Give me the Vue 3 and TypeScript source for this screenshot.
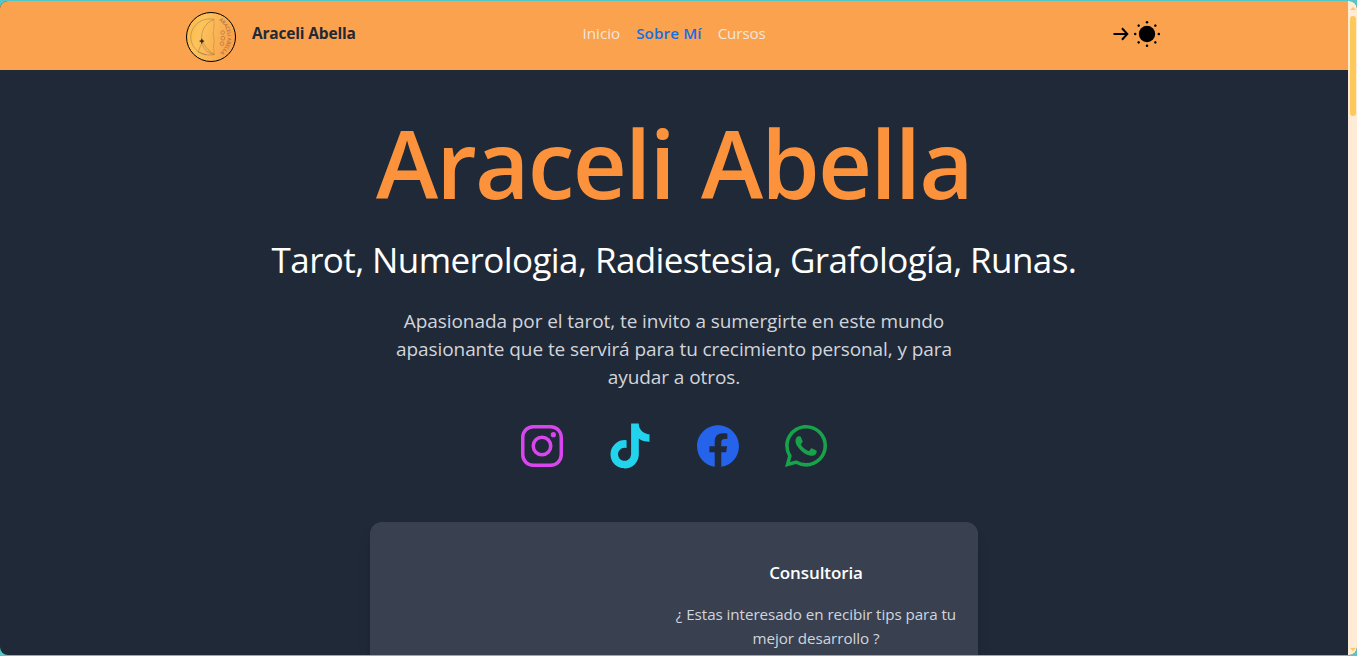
<script setup lang="ts">
interface NavLink { label: string; active?: boolean; cls: string }
interface Social { name: string; color: string; paths: string[] }

const links: NavLink[] = [
  { label: 'Inicio', cls: 'inicio' },
  { label: 'Sobre Mí', active: true, cls: 'sobre' },
  { label: 'Cursos', cls: 'cursos' },
]

const intro: string[] = [
  'Apasionada por el tarot, te invito a sumergirte en este mundo',
  'apasionante que te servirá para tu crecimiento personal, y para',
  'ayudar a otros.',
]

const rays: number[] = [0, 45, 90, 135, 180, 225, 270, 315]

const socials: Social[] = [
  {
    name: 'Instagram',
    color: '#d946ef',
    paths: [
      'M349.33 69.33a93.62 93.62 0 0193.34 93.34v186.66a93.62 93.62 0 01-93.34 93.34H162.67a93.62 93.62 0 01-93.34-93.34V162.67a93.62 93.62 0 0193.34-93.34h186.66m0-37.33H162.67C90.8 32 32 90.8 32 162.67v186.66C32 421.2 90.8 480 162.67 480h186.66C421.2 480 480 421.2 480 349.33V162.67C480 90.8 421.2 32 349.33 32z',
      'M377.33 162.67a28 28 0 1128-28 27.94 27.94 0 01-28 28zM256 181.33A74.67 74.67 0 11181.33 256 74.75 74.75 0 01256 181.33m0-37.33a112 112 0 10112 112 112 112 0 00-112-112z',
    ],
  },
  {
    name: 'TikTok',
    color: '#22d3ee',
    paths: [
      'M412.19 118.66a109.27 109.27 0 01-9.45-5.5 132.87 132.87 0 01-24.27-20.62c-18.1-20.71-24.86-41.72-27.35-56.43h.1C349.14 23.9 350 16 350.13 16h-82.44v318.78c0 4.28 0 8.51-.18 12.69 0 .52-.05 1-.08 1.56 0 .23 0 .47-.05.71v.18a70 70 0 01-35.22 55.56 68.8 68.8 0 01-34.11 9c-38.41 0-69.54-31.32-69.54-70s31.13-70 69.54-70a68.9 68.9 0 0121.41 3.39l.1-83.94a153.14 153.14 0 00-118 34.52 161.79 161.79 0 00-35.3 43.53c-3.48 6-16.61 30.11-18.2 69.24-1 22.21 5.67 45.22 8.85 54.73v.2c2 5.6 9.75 24.71 22.38 40.82A167.53 167.53 0 00115 470.66v-.2l.2.2C155.11 497.78 199.36 496 199.36 496c7.66-.31 33.32 0 62.46-13.81 32.32-15.31 50.72-38.12 50.72-38.12a158.46 158.46 0 0027.64-45.93c7.46-19.61 9.95-43.13 9.95-52.53V176.49c1 .6 14.32 9.41 14.32 9.41s19.19 12.3 49.13 20.31c21.48 5.7 50.42 6.9 50.42 6.9v-81.84c-10.14 1.1-30.73-2.1-51.81-12.61z',
    ],
  },
  {
    name: 'Facebook',
    color: '#2563eb',
    paths: [
      'M480 257.35c0-123.7-100.3-224-224-224s-224 100.3-224 224c0 111.8 81.9 204.47 189 221.29V322.12h-56.89v-64.77H221V208c0-56.13 33.45-87.16 84.61-87.16 24.51 0 50.15 4.38 50.15 4.38v55.13H327.5c-27.81 0-36.51 17.26-36.51 35v42h62.12l-9.92 64.77H291v156.54c107.1-16.81 189-109.48 189-221.31z',
    ],
  },
  {
    name: 'WhatsApp',
    color: '#16a34a',
    paths: [
      'M414.73 97.1A222.14 222.14 0 00256.94 32C134 32 33.92 131.58 33.87 254a220.61 220.61 0 0029.78 111L32 480l118.25-30.87a223.63 223.63 0 00106.6 27h.09c122.93 0 223-99.59 223.06-222A220.18 220.18 0 00414.73 97.1zM256.94 438.66h-.08a185.75 185.75 0 01-94.36-25.72l-6.77-4-70.17 18.32 18.73-68.09-4.41-7A183.46 183.46 0 0171.53 254c0-101.73 83.21-184.5 185.48-184.5a185 185 0 01185.33 184.64c-.04 101.74-83.21 184.52-185.4 184.52zm101.69-138.19c-5.57-2.78-33-16.2-38.08-18.05s-8.83-2.78-12.54 2.78-14.4 18-17.65 21.75-6.5 4.16-12.07 1.38-23.54-8.63-44.83-27.53c-16.57-14.71-27.75-32.87-31-38.42s-.35-8.56 2.44-11.32c2.51-2.49 5.57-6.48 8.36-9.72s3.72-5.56 5.57-9.26.93-6.94-.46-9.71-12.54-30.08-17.18-41.19c-4.53-10.82-9.12-9.35-12.54-9.52-3.25-.16-7-.2-10.69-.2a20.53 20.53 0 00-14.86 6.94c-5.11 5.56-19.51 19-19.51 46.28s20 53.68 22.76 57.38 39.3 59.73 95.21 83.76a323.11 323.11 0 0031.78 11.68c13.35 4.22 25.5 3.63 35.1 2.2 10.71-1.59 33-13.42 37.63-26.38s4.64-24.06 3.25-26.37-5.11-3.71-10.69-6.48z',
    ],
  },
]
</script>

<template>
  <div class="window">
    <div class="page">
      <header class="bar">
        <div class="brand">
          <svg class="logo" viewBox="0 0 50 50">
            <defs>
              <linearGradient id="disc" x1="0" y1="0" x2="1" y2="0.3">
                <stop offset="0" stop-color="#fbb445" />
                <stop offset="0.35" stop-color="#fcc45c" />
                <stop offset="1" stop-color="#f9a34c" />
              </linearGradient>
              <path id="rim" d="M33 8.5A20 20 0 0 1 33 41.5" />
            </defs>
            <circle cx="25" cy="25" r="24.5" fill="url(#disc)" stroke="#000" />
            <g fill="none" stroke="#8c6338" stroke-width="0.5" opacity="0.8">
              <path d="M28 7.3C15 5 4.8 14 4.8 25.2C4.8 36 15 45.3 28.4 42.5" />
              <path d="M28 7.3C19 11 14.8 19 15.8 28C18 33 22 39 28.4 42.5" />
              <path d="M28 7.3V17C26 22 28.5 26 28.2 30C27 35 28 39 28.4 42.5" stroke-dasharray="1.5 0.6" />
              <path d="M15.8 31L12 40L20 43M15.8 31C17 36 21 41 28.4 42.5" />
            </g>
            <path d="M15.8 26.2L16.8 28.2L18.7 29L16.8 30L15.8 32L14.8 30L13 29L14.8 28.2Z" fill="#38251a" />
            <g fill="none" stroke="#b7794a" stroke-width="0.8">
              <circle cx="36.7" cy="20.5" r="1.8" />
              <circle cx="36.9" cy="26.2" r="1.9" />
              <circle cx="36.1" cy="31.6" r="1.8" />
            </g>
            <text class="rim-text"><textPath href="#rim" textLength="37">ARACELI ABELLA</textPath></text>
          </svg>
          <span class="brand-name">Araceli Abella</span>
        </div>
        <nav class="nav">
          <a v-for="l in links" :key="l.label" :class="[l.cls, { active: l.active }]">{{ l.label }}</a>
        </nav>
        <div class="theme">
          <svg class="arrow" viewBox="0 0 16 14">
            <path d="M0.5 7H14M9 1.3L14.3 7L9 12.7" fill="none" stroke="#000" stroke-width="2" />
          </svg>
          <svg class="sun" viewBox="-14 -14 28 28">
            <circle r="8.2" />
            <circle v-for="r in rays" :key="r" cx="11.8" r="1.25" :transform="`rotate(${r})`" />
          </svg>
        </div>
      </header>

      <main class="hero">
        <h1><span>Araceli Abella</span></h1>
        <h2><span>Tarot, Numerologia, Radiestesia, Grafología, Runas.</span></h2>
        <p class="intro"><span v-for="line in intro" :key="line">{{ line }}</span></p>
        <div class="socials">
          <svg v-for="s in socials" :key="s.name" viewBox="0 0 512 512" :fill="s.color" :aria-label="s.name">
            <path v-for="p in s.paths" :key="p" :d="p" />
          </svg>
        </div>
        <section class="card">
          <div class="card-text">
            <h3>Consultoria</h3>
            <p><span>¿ Estas interesado en recibir tips para tu</span><span>mejor desarrollo ?</span></p>
          </div>
        </section>
      </main>
    </div>
    <aside class="scroll">
      <svg class="tip" viewBox="0 0 6 3"><path d="M0 3L3 0L6 3Z" /></svg>
      <i class="thumb"></i>
      <svg class="tip" viewBox="0 0 6 3"><path d="M0 0L3 3L6 0Z" /></svg>
    </aside>
  </div>
</template>

<style>
html, body { margin: 0; background: #55c8c6; overflow: hidden; }
</style>

<style scoped>
* { box-sizing: border-box; margin: 0; padding: 0; }
.window { display: flex; height: 654px; margin-top: 1px; border-radius: 8px; overflow: hidden; background: #202937; font-family: "Open Sans", "Noto Sans", sans-serif; }
.page { width: 1348px; height: 654px; overflow: hidden; }
.bar { display: grid; grid-template-columns: 396.5px 1fr auto; align-items: center; height: 69px; padding: 3px 187px 0 186px; background: #fba24e; }
.brand { display: flex; align-items: center; gap: 16px; }
.logo { width: 50px; height: 50px; }
.rim-text { font-size: 5px; font-weight: 600; fill: #b16f4a; }
.brand-name { font-size: 15.5px; line-height: 24px; font-weight: 700; letter-spacing: -0.18px; color: #1f2937; margin-top: -8px; white-space: nowrap; }
.nav { display: flex; gap: 16px; margin-top: -8px; font-size: 15.2px; line-height: 24px; color: #f0e6dd; white-space: nowrap; }
.nav .active { color: #146fe0; font-weight: 600; letter-spacing: 0.12px; }
.nav .cursos { letter-spacing: -0.1px; }
.theme { display: flex; align-items: center; gap: 4px; margin-top: -6px; }
.arrow { width: 16px; height: 14px; }
.sun { width: 28px; height: 28px; }
.hero { display: flex; flex-direction: column; align-items: center; text-align: center; white-space: nowrap; }
h1 { margin-top: 45px; font-size: 94px; line-height: 96px; font-weight: 600; letter-spacing: -1.8px; word-spacing: 4.5px; color: #fc933c; }
h2 { margin-top: 29px; font-size: 35px; line-height: 40px; font-weight: 400; letter-spacing: -0.6px; color: #fff; }
.intro { display: flex; flex-direction: column; margin-top: 27px; font-size: 19px; line-height: 28px; letter-spacing: -0.08px; color: #d1d5db; }
.socials { display: flex; gap: 40px; margin-top: 31px; }
.socials svg { width: 48px; height: 48px; }
.card { display: grid; grid-template-columns: 1fr 284px; width: 608px; height: 300px; margin-top: 52px; padding: 37px 20px; border-radius: 12px; background: #394151; box-shadow: 0 10px 15px -3px rgba(0, 0, 0, 0.15), 0 4px 6px -4px rgba(0, 0, 0, 0.15); }
.card-text { grid-column: 2; }
h3 { font-size: 17px; line-height: 28px; font-weight: 600; letter-spacing: -0.1px; color: #fff; }
.card p { display: flex; flex-direction: column; margin-top: 15px; font-size: 15.2px; line-height: 24px; letter-spacing: -0.06px; color: #d1d5db; }
.scroll { display: flex; flex-direction: column; align-items: center; width: 9px; padding: 6px 0 4px; background: #ffecd6; }
.tip { width: 6px; height: 3px; fill: #fcc95a; }
.thumb { width: 6px; height: 100px; margin: 6px 0 auto; border-radius: 3px; background: #fcc95a; }
</style>
